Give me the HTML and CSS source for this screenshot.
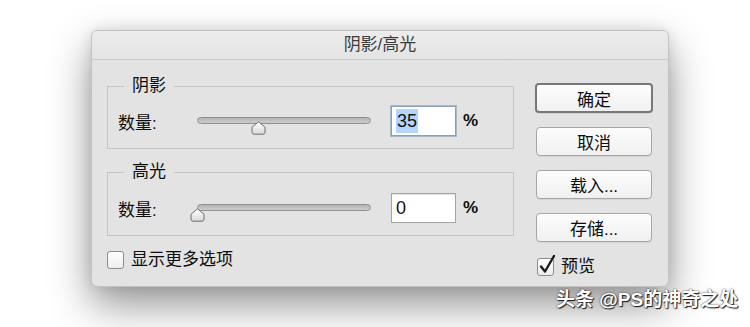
FILE: index.html
```html
<!DOCTYPE html>
<html lang="zh-CN">
<head>
    <meta charset="UTF-8">
    <meta name="viewport" content="width=device-width, initial-scale=1.0">
    <title>阴影/高光</title>
    <link rel="stylesheet" href="styles.css">
</head>
<body>
    <div class="dialog">
        <div class="title-bar">阴影/高光</div>
        <div class="dialog-body">
            <div class="main-col">
                <fieldset class="group">
                    <legend>阴影</legend>
                    <div class="amount-row">
                        <span class="amount-label">数量:</span>
                        <div class="slider">
                            <div class="slider-track"></div>
                            <svg class="slider-thumb" style="left: 35%" width="15" height="14" viewBox="0 0 15 14">
                                <defs>
                                    <linearGradient id="thumb-a" x1="0" y1="0" x2="0" y2="1">
                                        <stop offset="0" stop-color="#ffffff"/>
                                        <stop offset="1" stop-color="#d9d9d9"/>
                                    </linearGradient>
                                </defs>
                                <path d="M7.5 0.8 L14 6.2 V11.2 Q14 13.2 12 13.2 H3 Q1 13.2 1 11.2 V6.2 Z" fill="url(#thumb-a)" stroke="#6f6f6f" stroke-width="1"/>
                            </svg>
                        </div>
                        <div class="amount-input is-focused"><span class="selected">35</span></div>
                        <span class="percent">%</span>
                    </div>
                </fieldset>

                <fieldset class="group group-second">
                    <legend>高光</legend>
                    <div class="amount-row">
                        <span class="amount-label">数量:</span>
                        <div class="slider">
                            <div class="slider-track"></div>
                            <svg class="slider-thumb" style="left: 0%" width="15" height="14" viewBox="0 0 15 14">
                                <defs>
                                    <linearGradient id="thumb-b" x1="0" y1="0" x2="0" y2="1">
                                        <stop offset="0" stop-color="#ffffff"/>
                                        <stop offset="1" stop-color="#d9d9d9"/>
                                    </linearGradient>
                                </defs>
                                <path d="M7.5 0.8 L14 6.2 V11.2 Q14 13.2 12 13.2 H3 Q1 13.2 1 11.2 V6.2 Z" fill="url(#thumb-b)" stroke="#6f6f6f" stroke-width="1"/>
                            </svg>
                        </div>
                        <div class="amount-input">0</div>
                        <span class="percent">%</span>
                    </div>
                </fieldset>

                <label class="check-row">
                    <span class="checkbox"></span>
                    <span>显示更多选项</span>
                </label>
            </div>

            <div class="side-col">
                <button class="btn btn-default">确定</button>
                <button class="btn">取消</button>
                <button class="btn">载入...</button>
                <button class="btn">存储...</button>
                <label class="check-row check-preview">
                    <span class="checkbox">
                        <svg class="check-mark" width="20" height="22" viewBox="0 0 20 22">
                            <path d="M4 12.5 L8 17.5 L17 2" fill="none" stroke="#1c1c1c" stroke-width="2.4" stroke-linecap="round" stroke-linejoin="round"/>
                        </svg>
                    </span>
                    <span>预览</span>
                </label>
            </div>
        </div>
    </div>

    <div class="watermark">头条 @PS的神奇之处</div>
</body>
</html>
```

FILE: styles.css
```css
* {
    box-sizing: border-box;
}
body {
    margin: 0;
    width: 750px;
    height: 327px;
    overflow: hidden;
    position: relative;
    background-color: #ffffff;
    font-family: "Liberation Sans", "Noto Sans CJK SC", sans-serif;
    color: #0d0d0d;
}
.dialog {
    margin: 30px 0 0 91px;
    width: 578px;
    height: 257px;
    background-color: #e3e3e3;
    border: 1px solid #c2c2c2;
    border-radius: 6px;
    box-shadow: 0 18px 42px rgba(0, 0, 0, 0.42), 0 0 14px rgba(0, 0, 0, 0.1);
}
.title-bar {
    height: 29px;
    line-height: 28px;
    text-align: center;
    font-size: 17px;
    color: #3c3c3c;
    background: linear-gradient(#ececec, #e4e4e4);
    border-bottom: 1px solid #c9c9c9;
    border-radius: 5px 5px 0 0;
}
.dialog-body {
    display: flex;
    gap: 21px;
    padding: 17px 15px 0 15px;
}
.main-col {
    width: 407px;
    display: flex;
    flex-direction: column;
}
.group {
    margin: 0;
    padding: 11px 10px 12px 10px;
    border: 1px solid #c5c5c5;
}
.group legend {
    margin-left: 6px;
    padding: 0 8px;
    font-size: 17px;
    line-height: 18px;
}
.group-second {
    margin-top: 14px;
    padding-top: 12px;
}
.amount-row {
    display: flex;
    align-items: center;
    height: 30px;
}
.amount-label {
    font-size: 17px;
    width: 40px;
}
.slider {
    position: relative;
    width: 174px;
    height: 30px;
    margin-left: 39px;
}
.slider-track {
    position: absolute;
    left: 0;
    right: 0;
    top: 11px;
    height: 7px;
    border: 1px solid #8f8f8f;
    border-radius: 4px;
    background: linear-gradient(#b3b3b3, #cdcdcd);
}
.slider-thumb {
    position: absolute;
    top: 15px;
    margin-left: -7px;
    display: block;
}
.amount-input {
    width: 65px;
    height: 30px;
    margin-left: 20px;
    padding-left: 4px;
    background-color: #ffffff;
    border: 1px solid #a3a3a3;
    box-shadow: inset 0 1px 1px rgba(0, 0, 0, 0.12);
    font-size: 18px;
    line-height: 28px;
    color: #111;
}
.amount-input.is-focused {
    border-color: #8b9fb8;
    box-shadow: 0 0 0 1px #a9b9cc;
}
.selected {
    display: inline-block;
    background-color: #b4d5fe;
    line-height: 24px;
    padding: 0 1px;
}
.percent {
    margin-left: 7px;
    font-size: 17px;
    font-weight: 700;
}
.check-row {
    display: flex;
    align-items: center;
    gap: 7px;
    font-size: 17px;
    line-height: 18px;
    margin-top: 15px;
}
.checkbox {
    position: relative;
    width: 17px;
    height: 18px;
    border: 1px solid #8d8d8d;
    border-radius: 3px;
    background: linear-gradient(#ffffff, #ededed);
    flex-shrink: 0;
}
.check-mark {
    position: absolute;
    left: -1px;
    top: -5px;
}
.side-col {
    width: 118px;
    padding-top: 6px;
    display: flex;
    flex-direction: column;
    gap: 14px;
}
.btn {
    height: 29px;
    margin: 0 1px;
    padding: 0;
    font-family: "Liberation Sans", "Noto Sans CJK SC", sans-serif;
    font-size: 17px;
    color: #0d0d0d;
    background: linear-gradient(#fdfdfd, #f0f0f0);
    border: 1px solid #a6a6a6;
    border-radius: 4px;
    box-shadow: 0 1px 0 rgba(0, 0, 0, 0.06);
}
.btn-default {
    height: 30px;
    margin: 0;
    border: 2px solid #777777;
}
.check-preview {
    margin-top: 2px;
    padding-left: 2px;
}
.watermark {
    position: absolute;
    left: 556px;
    top: 288px;
    font-size: 19px;
    font-weight: 700;
    line-height: 24px;
    color: #ffffff;
    text-shadow: 1px 1px 1px #1a1a1a, 0 0 2px rgba(0, 0, 0, 0.8);
}
```
